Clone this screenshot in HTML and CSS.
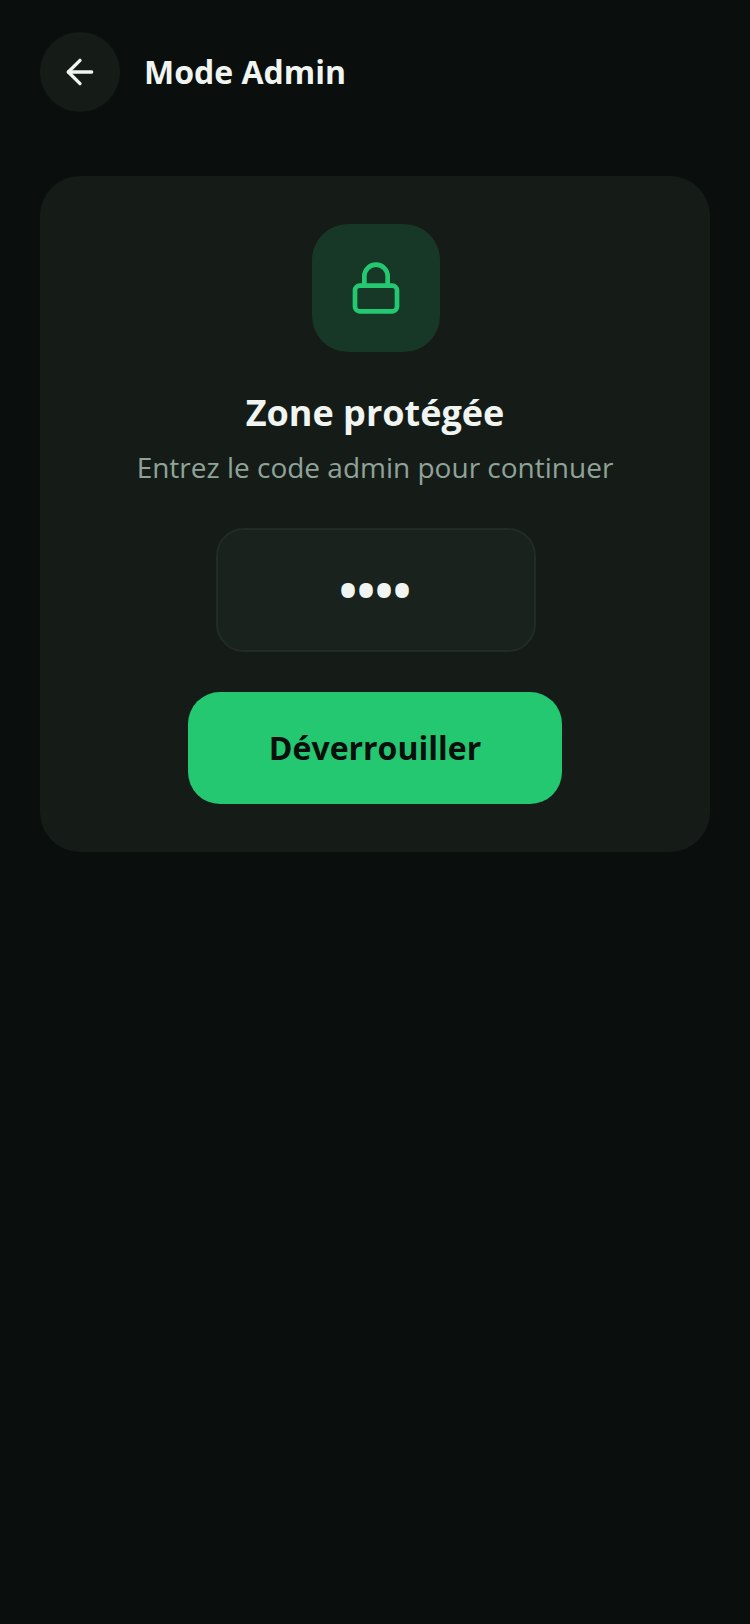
FILE: index.html
```html
<!DOCTYPE html>
<html lang="fr">
<head>
  <meta charset="UTF-8" />
  <title>Mode Admin</title>
  <link rel="stylesheet" href="styles.css">
</head>
<body>
  <div class="header">
    <button class="back" aria-label="Retour">
      <svg width="40" height="40" viewBox="0 0 24 24" fill="none" stroke="#f0f5f2" stroke-width="2" stroke-linecap="round" stroke-linejoin="round">
        <path d="M19 12H5"/>
        <path d="M12 19l-7-7 7-7"/>
      </svg>
    </button>
    <div class="title">Mode Admin</div>
  </div>

  <div class="card">
    <div class="lock-box">
      <svg width="56" height="56" viewBox="0 0 24 24" fill="none" stroke="#23c871" stroke-width="2" stroke-linecap="round" stroke-linejoin="round">
        <rect x="3" y="11" width="18" height="11" rx="2"/>
        <path d="M7 11V7a5 5 0 0 1 10 0v4"/>
      </svg>
    </div>
    <h2>Zone protégée</h2>
    <p>Entrez le code admin pour continuer</p>
    <div class="code">••••</div>
    <button class="unlock">Déverrouiller</button>
  </div>
</body>
</html>
```

FILE: styles.css
```css
body { margin: 0; min-height: 1624px; background: #0a0f0d; color: #f0f5f2; font-family: "Open Sans", sans-serif; }
.header { display: flex; align-items: center; gap: 24px; padding: 32px 40px 0; }
.back { width: 80px; height: 80px; padding: 0; border: none; border-radius: 50%; background: #151c18; display: flex; align-items: center; justify-content: center; }
.title { font-size: 32px; font-weight: 700; margin-bottom: 2px; }
.card { margin: 64px 40px 0; padding: 48px; background: #151c18; border-radius: 40px; display: flex; flex-direction: column; align-items: center; }
.lock-box { width: 128px; height: 128px; margin-left: 2px; border-radius: 36px; background: #173826; display: flex; align-items: center; justify-content: center; }
.card h2 { margin: 37px 0 0; font-size: 36px; line-height: 48px; font-weight: 700; }
.card p { margin: 6px 0 0; font-size: 28px; line-height: 48px; color: #8fa398; }
.code { box-sizing: border-box; width: 320px; height: 124px; margin: 37px 0 0 2px; padding: 0 2px 2px 0; background: #19221d; border: 2px solid #212c27; border-radius: 28px; display: flex; align-items: center; justify-content: center; font-size: 48px; font-weight: 700; }
.unlock { width: 374px; height: 112px; margin-top: 40px; padding: 0 0 2px; border: none; border-radius: 32px; background: #23c871; color: #0a0f0d; font-family: inherit; font-size: 32px; font-weight: 700; }
```
